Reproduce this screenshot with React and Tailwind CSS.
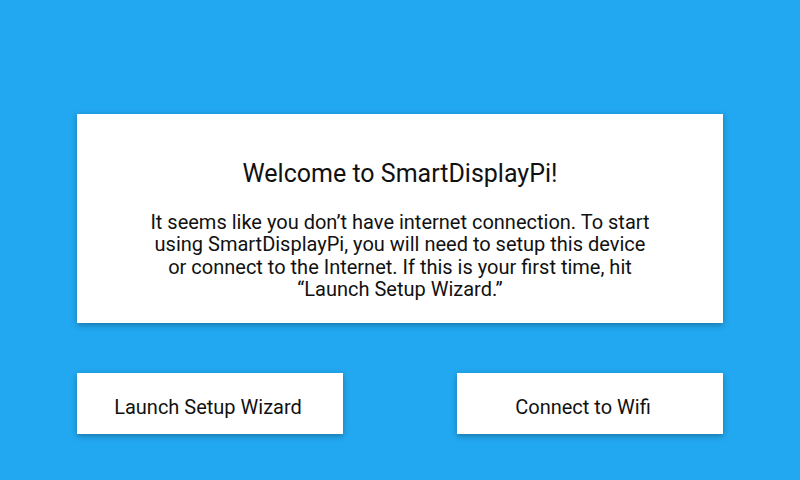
import React from 'react';

export default function App() {
  return (
    <div className="w-[800px] h-[480px] bg-[#22a8f0] px-[77px] pt-[114px] font-['Roboto',sans-serif] text-[#111]">
      <div className="h-[209px] bg-white shadow-[0_2px_6px_rgba(0,0,0,0.3)] flex flex-col items-center pt-[46px] text-center">
        <h1 className="text-[25px] leading-[28px]">Welcome to SmartDisplayPi!</h1>
        <p className="mt-[23px] text-[20px] leading-[22.3px]">
          It seems like you don’t have internet connection. To start
          <br />
          using SmartDisplayPi, you will need to setup this device
          <br />
          or connect to the Internet. If this is your first time, hit
          <br />
          “Launch Setup Wizard.”
        </p>
      </div>

      <div className="mt-[50px] flex justify-between">
        <button className="w-[266px] h-[61px] bg-white shadow-[0_2px_6px_rgba(0,0,0,0.3)] text-[20px] pt-[7px] pr-[4px]">
          Launch Setup Wizard
        </button>
        <button className="w-[266px] h-[61px] bg-white shadow-[0_2px_6px_rgba(0,0,0,0.3)] text-[20px] pt-[7px] pr-[14px]">
          Connect to Wifi
        </button>
      </div>
    </div>
  );
}
